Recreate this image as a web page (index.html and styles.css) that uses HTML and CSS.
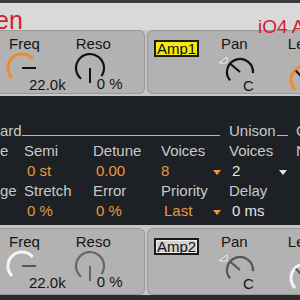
FILE: index.html
```html
<!DOCTYPE html>
<html lang="en">
<head>
    <meta charset="UTF-8">
    <title>Synth</title>
    <link rel="stylesheet" href="styles.css">
</head>
<body>
    <div class="topline"></div>
    <header class="titlebar">
        <span class="dev-name">en</span>
        <span class="dev-name dev-right">iO4 A</span>
    </header>

    <!-- Filter / Amp 1 -->
    <section class="panel-row">
        <div class="box box-first">
            <div class="ctl ctl-freq">
                <div class="ctl-label">Freq</div>
                <div class="ctl-body">
                    <svg class="knob" width="36" height="36" viewBox="0 0 36 36">
                        <path d="M8.1 27.9 A14 14 0 1 1 28.72 9" fill="none" stroke="#ee8b2c" stroke-width="3"/>
                        <path d="M18 18 H32" stroke="#111" stroke-width="2"/>
                    </svg>
                    <span class="ctl-val">22.0k</span>
                </div>
            </div>
            <div class="ctl ctl-reso">
                <div class="ctl-label">Reso</div>
                <div class="ctl-body">
                    <svg class="knob" width="36" height="36" viewBox="0 0 36 36">
                        <path d="M9 28.72 A14 14 0 1 1 29.47 26.03" fill="none" stroke="#111" stroke-width="2.2"/>
                        <path d="M18 18 V33" stroke="#111" stroke-width="2"/>
                    </svg>
                    <span class="ctl-val val-reso">0 %</span>
                </div>
            </div>
        </div>
        <div class="box box-second">
            <div class="amp-tag amp-on">Amp1</div>
            <div class="ctl ctl-pan">
                <div class="ctl-label">Pan</div>
                <div class="ctl-body">
                    <svg class="knob" width="44" height="36" viewBox="0 0 44 36">
                        <polygon points="11,3 3,9 11,9" fill="#a8a8a8" stroke="#eee" stroke-width="1"/>
                        <path d="M14.04 26.36 A13 13 0 1 1 36.95 19.13" fill="none" stroke="#111" stroke-width="2.2"/>
                        <path d="M24 18 L14.5 10" stroke="#111" stroke-width="2"/>
                    </svg>
                    <span class="ctl-val val-pan">C</span>
                </div>
            </div>
            <div class="ctl ctl-lev">
                <div class="ctl-label">Le</div>
                <div class="ctl-body">
                    <svg class="knob knob-lev" width="36" height="36" viewBox="0 0 36 36">
                        <path d="M8.1 27.9 A14 14 0 1 1 27.9 27.9" fill="none" stroke="#ee8b2c" stroke-width="3"/>
                        <path d="M18 18 L8.8 8.8" stroke="#111" stroke-width="2"/>
                    </svg>
                </div>
            </div>
        </div>
    </section>

    <!-- Keyboard / Unison -->
    <section class="keyboard">
        <div class="kb-head">
            <span class="kb-title">ard</span>
            <span class="kb-rule"></span>
            <span class="kb-title kb-unison">Unison</span>
            <span class="kb-rule kb-rule-short"></span>
            <span class="kb-title kb-glide">G</span>
        </div>
        <div class="kb-grid">
            <span class="kb-label">e</span>
            <span class="kb-label">Semi</span>
            <span class="kb-label">Detune</span>
            <span class="kb-label">Voices</span>
            <span class="kb-label">Voices</span>
            <span class="kb-label">N</span>

            <span></span>
            <span class="kb-val">0 st</span>
            <span class="kb-val">0.00</span>
            <span class="kb-val kb-menu val-eight">8 <i class="dd"></i></span>
            <span class="kb-val kb-menu kb-white">2 <i class="dd"></i></span>
            <span></span>

            <span class="kb-label">ge</span>
            <span class="kb-label">Stretch</span>
            <span class="kb-label">Error</span>
            <span class="kb-label">Priority</span>
            <span class="kb-label">Delay</span>
            <span></span>

            <span></span>
            <span class="kb-val">0 %</span>
            <span class="kb-val">0 %</span>
            <span class="kb-val kb-menu">Last <i class="dd"></i></span>
            <span class="kb-val kb-white">0 ms</span>
            <span></span>
        </div>
    </section>

    <!-- Filter / Amp 2 -->
    <section class="panel-row lower">
        <div class="box box-first">
            <div class="ctl ctl-freq">
                <div class="ctl-label">Freq</div>
                <div class="ctl-body">
                    <svg class="knob" width="36" height="36" viewBox="0 0 36 36">
                        <path d="M8.1 27.9 A14 14 0 1 1 28.72 9" fill="none" stroke="#f4f4f4" stroke-width="3"/>
                        <path d="M18 18 H32" stroke="#555" stroke-width="2"/>
                    </svg>
                    <span class="ctl-val">22.0k</span>
                </div>
            </div>
            <div class="ctl ctl-reso">
                <div class="ctl-label">Reso</div>
                <div class="ctl-body">
                    <svg class="knob" width="36" height="36" viewBox="0 0 36 36">
                        <path d="M9 28.72 A14 14 0 1 1 29.47 26.03" fill="none" stroke="#666" stroke-width="2.2"/>
                        <path d="M18 18 V33" stroke="#666" stroke-width="2"/>
                    </svg>
                    <span class="ctl-val val-reso">0 %</span>
                </div>
            </div>
        </div>
        <div class="box box-second">
            <div class="amp-tag">Amp2</div>
            <div class="ctl ctl-pan">
                <div class="ctl-label">Pan</div>
                <div class="ctl-body">
                    <svg class="knob" width="44" height="36" viewBox="0 0 44 36">
                        <polygon points="11,3 3,9 11,9" fill="#a8a8a8" stroke="#eee" stroke-width="1"/>
                        <path d="M14.04 26.36 A13 13 0 1 1 36.95 19.13" fill="none" stroke="#555" stroke-width="2.2"/>
                        <path d="M24 18 L14.5 10" stroke="#555" stroke-width="2"/>
                    </svg>
                    <span class="ctl-val val-pan">C</span>
                </div>
            </div>
            <div class="ctl ctl-lev">
                <div class="ctl-label">Le</div>
                <div class="ctl-body">
                    <svg class="knob knob-lev" width="36" height="36" viewBox="0 0 36 36">
                        <path d="M8.1 27.9 A14 14 0 1 1 27.9 27.9" fill="none" stroke="#f4f4f4" stroke-width="3"/>
                        <path d="M18 18 L8.8 8.8" stroke="#555" stroke-width="2"/>
                    </svg>
                </div>
            </div>
        </div>
    </section>
    <div class="bottomline"></div>
</body>
</html>
```

FILE: styles.css
```css
* {
    margin: 0;
    padding: 0;
    box-sizing: border-box;
}

body {
    width: 300px;
    height: 300px;
    overflow: hidden;
    background-color: #2b2b2b;
    font-family: "Liberation Sans", Arial, sans-serif;
}

.topline {
    height: 3px;
    background-color: #3a3a3a;
}

.titlebar {
    height: 27px;
    background-color: #d9d9d9;
    display: flex;
    justify-content: space-between;
}

.dev-name {
    color: #d3202f;
    font-size: 25px;
    line-height: 27px;
    margin-top: 4px;
    margin-left: -5px;
    white-space: nowrap;
}

.dev-right {
    font-size: 19px;
    line-height: 20px;
    margin-top: 14px;
    margin-left: 0;
    width: 42px;
    position: relative;
    z-index: 1;
}

/* panneaux gris */
.panel-row {
    display: flex;
    gap: 2px;
    height: 66px;
    padding-bottom: 2px;
    background-color: #c6c6c6;
}

.panel-row.lower {
    height: 70px;
    padding-top: 3px;
    padding-bottom: 0;
}

.box {
    display: flex;
    align-items: flex-start;
    background-color: #b2b2b2;
    border: 1px solid #989898;
    border-radius: 6px;
}

.box-first {
    width: 145px;
    flex-shrink: 0;
    border-left: none;
    border-radius: 0 6px 6px 0;
}

.box-second {
    flex: 1;
    min-width: 0;
    overflow: hidden;
    border-right: none;
    border-radius: 6px 0 0 6px;
    padding-left: 6px;
}

.ctl {
    display: flex;
    flex-direction: column;
    flex-shrink: 0;
    padding-top: 5px;
}

.ctl-label {
    font-size: 15px;
    line-height: 16px;
    color: #151515;
}

.ctl-body {
    display: flex;
    align-items: flex-start;
}

.knob {
    display: block;
    margin-top: -2px;
    flex-shrink: 0;
}

.ctl-val {
    font-size: 15px;
    line-height: 16px;
    color: #151515;
    margin-top: 25px;
    margin-left: -11px;
    white-space: nowrap;
}

.ctl-freq {
    margin-left: 4px;
}

.ctl-freq .ctl-label {
    padding-left: 5px;
}

.ctl-reso {
    margin-left: 6px;
}

.ctl-reso .ctl-label {
    padding-left: 4px;
}

.val-reso {
    margin-left: -11px;
    margin-top: 24px;
}

.amp-tag {
    width: 45px;
    height: 17px;
    flex-shrink: 0;
    margin-top: 9px;
    border: 2px solid #1a1a1a;
    background-color: #d2d2d2;
    box-shadow: inset 0 0 0 1px #eeeeee;
    font-size: 15px;
    line-height: 13px;
    text-align: center;
    color: #111;
}

.amp-tag.amp-on {
    background-color: #f3ea12;
    box-shadow: none;
}

.ctl-pan {
    margin-left: 17px;
}

.ctl-pan .ctl-label {
    padding-left: 5px;
}

.ctl-pan .knob {
    margin-top: 2px;
}

.val-pan {
    margin-left: -17px;
    margin-top: 26px;
}

.ctl-lev {
    margin-left: 34px;
}

.knob-lev {
    margin-top: 10px;
    margin-left: -1px;
}

/* section clavier */
.keyboard {
    height: 129px;
    padding-top: 25px;
    background-color: #1d2125;
    font-size: 15px;
    line-height: 20px;
    color: #c9c9c9;
}

.kb-head {
    display: flex;
    align-items: flex-start;
    height: 20px;
    white-space: nowrap;
}

.kb-title {
    width: 22px;
    flex-shrink: 0;
}

.kb-rule {
    width: 198px;
    height: 1px;
    flex-shrink: 0;
    margin-top: 14px;
    background-color: #b8b8b8;
}

.kb-unison {
    width: 43px;
    margin-left: 9px;
}

.kb-rule-short {
    width: 11px;
    margin-left: 5px;
}

.kb-glide {
    margin-left: 8px;
}

.kb-grid {
    display: grid;
    grid-template-columns: 24px 69px 68px 68px 67px 40px;
    grid-auto-rows: 20px;
    white-space: nowrap;
}

.kb-val {
    color: #e8993a;
    padding-left: 3px;
}

.kb-white {
    color: #e4e4e4;
}

.kb-menu {
    display: flex;
    justify-content: space-between;
    padding-right: 8px;
}

.kb-menu.kb-white {
    padding-right: 9px;
}

.val-eight {
    padding-left: 0;
}

.dd {
    width: 0;
    height: 0;
    margin-top: 9px;
    border-left: 4px solid transparent;
    border-right: 4px solid transparent;
    border-top: 5px solid currentColor;
}

.bottomline {
    height: 5px;
    background-color: #2b2b2b;
}
```
